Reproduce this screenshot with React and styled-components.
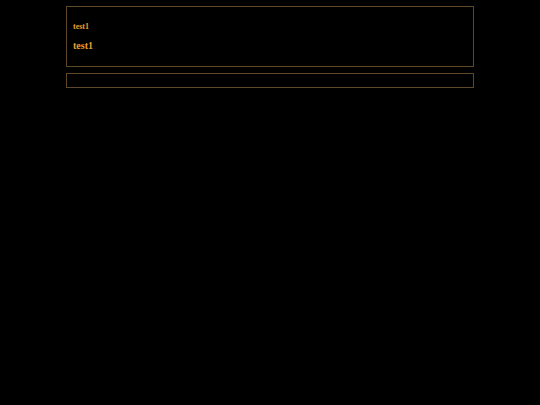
import React from 'react';
import styled, { createGlobalStyle } from 'styled-components';

const GlobalStyle = createGlobalStyle`
    html, body {
        margin: 0;
        padding: 0;
        background: #000;
        height: 100%;
    }
    body {
        font-family: "Liberation Serif", "Times New Roman", serif;
    }
`;

const Page = styled.div`
    width: 408px;
    margin: 0 auto;
    padding-top: 6px;
    display: flex;
    flex-direction: column;
    gap: 6px;
`;

const Panel = styled.div`
    border: 1px solid #5e4827;
    padding: ${props => props.empty ? '0' : '14px 6px 0'};
    height: ${props => props.empty ? '13px' : '45px'};
    color: #e3a12f;
`;

const Label = styled.div`
    font-size: 8px;
    font-weight: bold;
    line-height: 12px;
`;

const Title = styled.div`
    font-size: 10px;
    font-weight: bold;
    line-height: 14px;
    margin-top: 6px;
`;

class App extends React.Component {
    render() {
        return (
            <>
                <GlobalStyle />
                <Page>
                    <Panel>
                        <Label>test1</Label>
                        <Title>test1</Title>
                    </Panel>
                    <Panel empty />
                </Page>
            </>
        );
    }
}

export default App;
